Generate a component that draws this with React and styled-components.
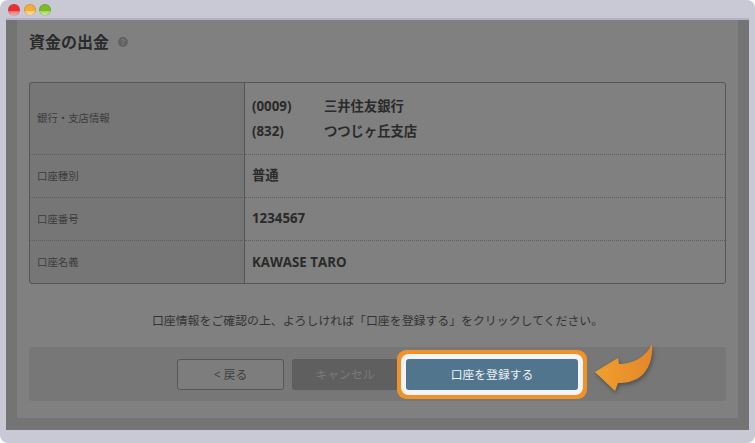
import React from "react";
import styled, { createGlobalStyle } from "styled-components";

const GlobalStyle = createGlobalStyle`
  html, body {
    margin: 0;
    background: #fff;
  }
  body {
    font-family: "Open Sans", "Noto Sans CJK JP", sans-serif;
  }
`;

const Window = styled.div`
  width: 755px;
  height: 443px;
  display: flex;
  flex-direction: column;
  background: #c9c9d6;
  border-radius: 8px;
  overflow: hidden;
`;

const TitleBar = styled.div`
  height: 18px;
  flex: none;
  display: flex;
  align-items: center;
  gap: 3.5px;
  padding: 2px 0 0 8px;
  box-sizing: border-box;
`;

const Light = styled.span`
  width: 12px;
  height: 12px;
  border-radius: 50%;
  background: linear-gradient(
    ${(p) => p.$top} 0%,
    ${(p) => p.$top} 55%,
    ${(p) => p.$bottom} 62%,
    ${(p) => p.$pale} 100%
  );
  box-shadow: inset 0 0 0 1px rgba(110, 110, 110, 0.3);
`;

const Screen = styled.div`
  flex: 1;
  margin: 0 6px 13px;
  display: flex;
  background: #747474;
  border-top: 2px solid #b3b3c8;
  padding: 0 11px 12px;
  min-height: 0;
`;

const Panel = styled.main`
  flex: 1;
  background: #808080;
  padding: 0 12px;
  display: flex;
  flex-direction: column;
`;

const Heading = styled.div`
  display: flex;
  align-items: center;
  gap: 9px;
  height: 44px;
`;

const Title = styled.h1`
  margin: 0;
  font-size: 16px;
  line-height: 22px;
  font-weight: 700;
  color: #2a2a2a;
`;

const Help = styled.span`
  width: 10px;
  height: 10px;
  border-radius: 50%;
  background: #626262;
  color: #7c7c7c;
  font-size: 8px;
  font-weight: 700;
  line-height: 10px;
  text-align: center;
`;

const InfoTable = styled.div`
  margin-top: 18px;
  height: 202px;
  box-sizing: border-box;
  border: 1px solid #565656;
  border-radius: 3px;
  display: grid;
  grid-template-columns: 215px 1fr;
  grid-template-rows: 72px 43px 43px 1fr;
  background: linear-gradient(90deg, #767676 215px, #808080 215px);
`;

const LabelCell = styled.div`
  display: flex;
  align-items: center;
  padding: 0 0 2px 7px;
  font-size: 10.4px;
  color: #3c3c3c;
  border-right: 1px solid #565656;
  border-bottom: ${(p) => (p.$last ? "0" : "1px dotted #5e5e5e")};
`;

const ValueCell = styled.div`
  display: flex;
  flex-direction: column;
  justify-content: center;
  gap: 7px;
  padding: 0 0 ${(p) => p.$lift ?? 2}px 7px;
  font-size: 13.3px;
  font-weight: 700;
  color: #2a2a2a;
  border-bottom: ${(p) => (p.$last ? "0" : "1px dotted #5e5e5e")};
`;

const CodeLine = styled.div`
  display: grid;
  grid-template-columns: 72px 1fr;
  line-height: 18px;
`;

const Notice = styled.p`
  margin: 27px 0 0;
  font-size: 11.9px;
  line-height: 18px;
  text-align: center;
  color: #333;
`;

const ActionBar = styled.div`
  position: relative;
  margin-top: 18px;
  height: 54px;
  display: flex;
  justify-content: center;
  align-items: center;
  gap: 7.5px;
  background: #777;
  border-radius: 3px;
`;

const BackButton = styled.div`
  width: 107px;
  height: 31px;
  box-sizing: border-box;
  border: 1px solid #565656;
  border-radius: 3px;
  padding-bottom: 1px;
  display: flex;
  align-items: center;
  justify-content: center;
  font-size: 11.8px;
  color: #3f3f3f;
  background: #7d7d7d;
`;

const CancelButton = styled.div`
  width: 107px;
  height: 31px;
  box-sizing: border-box;
  border-radius: 3px;
  padding-bottom: 1px;
  display: flex;
  align-items: center;
  justify-content: center;
  font-size: 11.8px;
  color: #7a7a7a;
  background: #5f5f5f;
`;

const RegisterButton = styled.div`
  position: relative;
  width: 172px;
  height: 31px;
  box-sizing: border-box;
  border-radius: 3px;
  padding-bottom: 1px;
  display: flex;
  align-items: center;
  justify-content: center;
  font-size: 11.8px;
  color: #eef2f5;
  background: #51758d;
  box-shadow: 0 0 0 5px #f4f4f6, 0 0 0 9px #ef9328;
`;

const Arrow = styled.svg`
  position: absolute;
  left: 566px;
  top: -3px;
  width: 60px;
  height: 48px;
  overflow: visible;
`;

export default function App() {
  return (
    <>
      <GlobalStyle />
      <Window>
        <TitleBar>
          <Light $top="#e9302c" $bottom="#f0706a" $pale="#f6c9c0" />
          <Light $top="#f5ad35" $bottom="#f8c878" $pale="#fae4b8" />
          <Light $top="#79bd22" $bottom="#a8d868" $pale="#d8edb4" />
        </TitleBar>
        <Screen>
          <Panel>
            <Heading>
              <Title>資金の出金</Title>
              <Help>?</Help>
            </Heading>
            <InfoTable>
              <LabelCell>銀行・支店情報</LabelCell>
              <ValueCell $lift={0}>
                <CodeLine><span>(0009)</span><span>三井住友銀行</span></CodeLine>
                <CodeLine><span>(832)</span><span>つつじヶ丘支店</span></CodeLine>
              </ValueCell>
              <LabelCell>口座種別</LabelCell>
              <ValueCell $lift={4}>普通</ValueCell>
              <LabelCell>口座番号</LabelCell>
              <ValueCell>1234567</ValueCell>
              <LabelCell $last>口座名義</LabelCell>
              <ValueCell $last $lift={0}>KAWASE TARO</ValueCell>
            </InfoTable>
            <Notice>口座情報をご確認の上、よろしければ「口座を登録する」をクリックしてください。</Notice>
            <ActionBar>
              <BackButton>&lt; 戻る</BackButton>
              <CancelButton>キャンセル</CancelButton>
              <RegisterButton>口座を登録する</RegisterButton>
              <Arrow viewBox="0 0 60 48">
                <defs>
                  <linearGradient id="arrowFill" x1="0" x2="1" y1="0" y2="0">
                    <stop offset="0" stopColor="#efa02c" />
                    <stop offset="1" stopColor="#e5872a" />
                  </linearGradient>
                </defs>
                <path
                  d="M0 28 L23 14 L24 20 C38 20 50 14 57 0 C58 14 54 26 45 33 C38 38 30 39 23 39 L20 47 Z"
                  fill="url(#arrowFill)"
                  style={{ filter: "drop-shadow(1px 2px 2px rgba(0,0,0,.35))" }}
                />
              </Arrow>
            </ActionBar>
          </Panel>
        </Screen>
      </Window>
    </>
  );
}
